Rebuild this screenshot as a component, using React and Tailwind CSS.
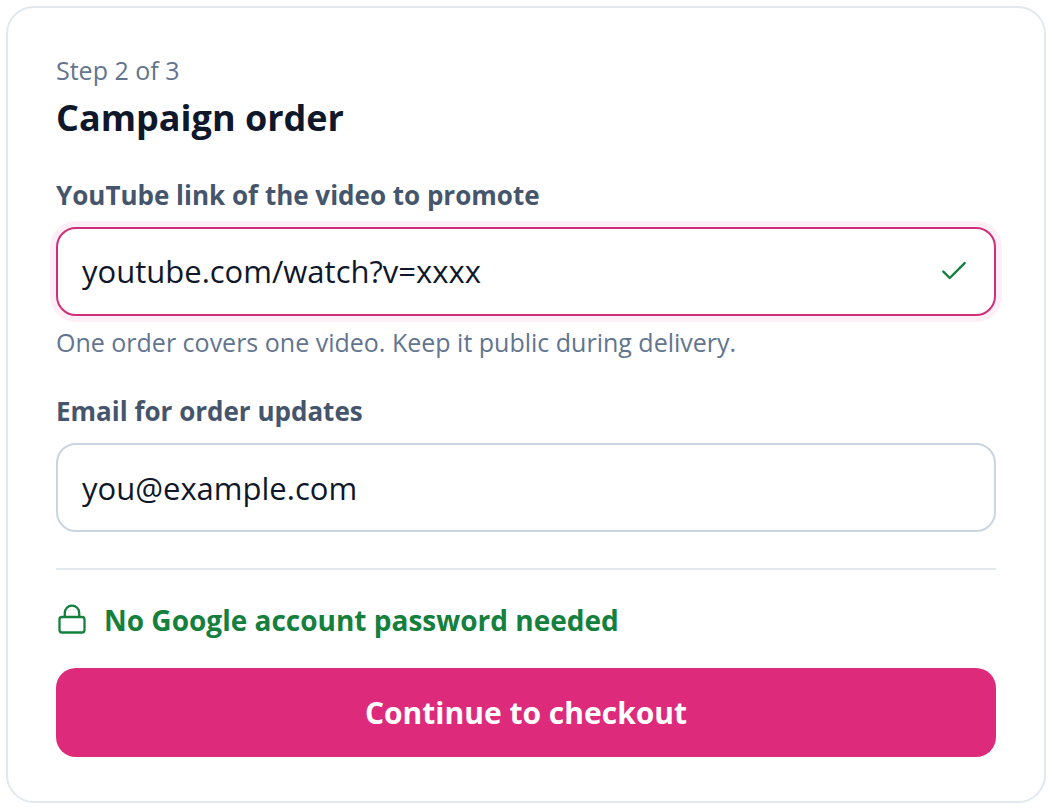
import React, { useState } from "react";

const LockIcon = () => (
  <svg
    className="h-8 w-8 shrink-0"
    viewBox="0 0 32 32"
    fill="none"
    stroke="currentColor"
    strokeWidth="2.3"
    aria-hidden="true"
  >
    <rect x="3.5" y="13" width="25" height="15.5" rx="2.5" />
    <path d="M8.8 13V8.9a7.2 7.2 0 0 1 14.4 0V13" />
  </svg>
);

const CheckIcon = () => (
  <svg
    className="pointer-events-none h-8 w-8 shrink-0 text-[#15803d]"
    viewBox="0 0 24 24"
    fill="none"
    stroke="currentColor"
    strokeWidth="1.8"
    strokeLinecap="round"
    strokeLinejoin="round"
    aria-hidden="true"
  >
    <path d="M20 5.3 8.8 16.5 4 11.7" />
  </svg>
);

const App = () => {
  const [videoLink, setVideoLink] = useState("youtube.com/watch?v=xxxx");
  const [email, setEmail] = useState("you@example.com");

  const handleSubmit = (e) => {
    e.preventDefault();
  };

  return (
    <main className="bg-white p-[6px] font-['Open_Sans','Noto_Sans',sans-serif]">
      <form
        className="flex flex-col rounded-[28px] border-2 border-slate-200 bg-white px-12 py-11"
        onSubmit={handleSubmit}
      >
        <p className="text-[25px] leading-9 text-slate-500">Step 2 of 3</p>
        <h1 className="mt-1 text-[36px] leading-[52px] font-bold text-slate-900">
          Campaign order
        </h1>

        <label
          htmlFor="videoLink"
          className="mt-[33px] text-[26px] leading-9 font-bold text-slate-600"
        >
          YouTube link of the video to promote
        </label>
        <div className="mt-[14px] flex h-[89px] items-center rounded-[20px] border-2 border-[#cf2f78] bg-white px-6 ring-6 ring-[#feeff6]">
          <input
            id="videoLink"
            type="text"
            className="min-w-0 flex-1 bg-transparent text-[31px] text-slate-900 outline-none"
            value={videoLink}
            onChange={(e) => setVideoLink(e.target.value)}
          />
          <CheckIcon />
        </div>
        <p className="mt-2 text-[25px] leading-9 text-slate-500">
          One order covers one video. Keep it public during delivery.
        </p>

        <label
          htmlFor="email"
          className="mt-[33px] text-[26px] leading-9 font-bold text-slate-600"
        >
          Email for order updates
        </label>
        <input
          id="email"
          type="email"
          className="mt-[14px] h-[89px] rounded-[20px] border-2 border-slate-300 bg-white px-6 text-[31px] text-slate-900 outline-none"
          value={email}
          onChange={(e) => setEmail(e.target.value)}
        />

        <hr className="mt-9 border-t-2 border-slate-200" />

        <div className="mt-8 flex items-center gap-4 text-[#15803d]">
          <LockIcon />
          <p className="text-[28px] leading-9 font-bold">
            No Google account password needed
          </p>
        </div>
        <button
          type="submit"
          className="mt-[30px] h-[89px] rounded-[20px] bg-[#de2a7a] text-[30px] font-bold text-white"
        >
          Continue to checkout
        </button>
      </form>
    </main>
  );
};

export default App;
